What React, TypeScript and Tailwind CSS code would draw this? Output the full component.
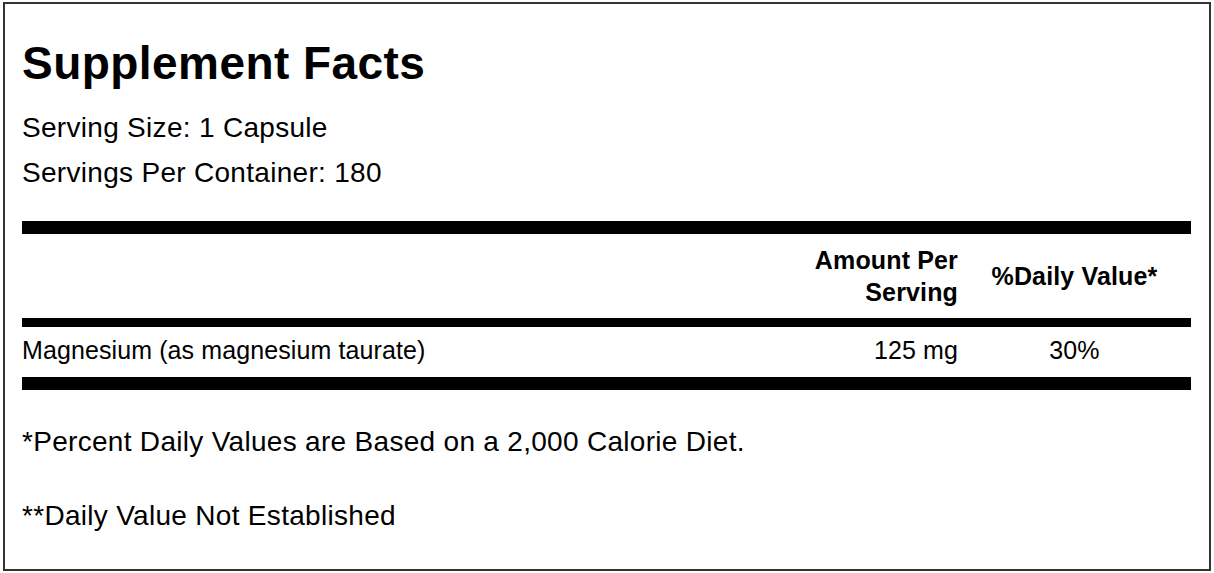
import React from "react";

export default function App() {
  return (
    <div className="w-[1214px] h-[573px] bg-white overflow-hidden" style={{ fontFamily: '"Liberation Sans", Arial, Helvetica, sans-serif' }}>
      <div className="ml-[3px] mt-[2px] w-[1208px] h-[569px] border-2 border-[#333] pl-[17px] pr-[18px] text-black">
        <h1 className="mt-[36px] text-[46px] leading-[46px] font-bold tracking-[0.45px]">Supplement Facts</h1>
        <div className="mt-[19px] text-[28px] leading-[45px] tracking-[0.3px]">
          <div>Serving Size: 1 Capsule</div>
          <div>Servings Per Container: 180</div>
        </div>
        <div className="mt-[26px] h-[13px] bg-black" />
        <div className="grid grid-cols-[1fr_200px_233px] h-[84px] items-center text-[25px] leading-[32px] font-bold tracking-[0.15px]">
          <div />
          <div className="text-right">
            Amount Per
            <br />
            Serving
          </div>
          <div className="text-center">%Daily Value*</div>
        </div>
        <div className="h-[9px] bg-black" />
        <div className="grid grid-cols-[1fr_200px_233px] h-[50px] pb-[4px] text-[25px] leading-[46px] tracking-[0.1px]">
          <div>Magnesium (as magnesium taurate)</div>
          <div className="text-right">125 mg</div>
          <div className="text-center">30%</div>
        </div>
        <div className="h-[13px] bg-black" />
        <p className="mt-[38px] text-[28px] leading-[28px] tracking-[0.3px]">*Percent Daily Values are Based on a 2,000 Calorie Diet.</p>
        <p className="mt-[46px] text-[28px] leading-[28px] tracking-[0.3px]">**Daily Value Not Established</p>
      </div>
    </div>
  );
}
